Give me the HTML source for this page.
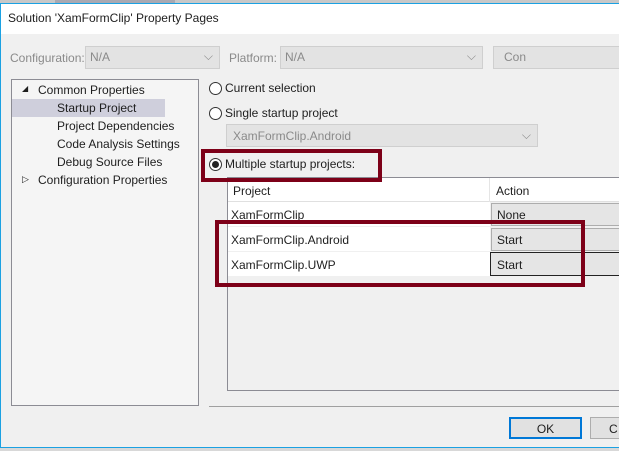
<!DOCTYPE html><html><head><style>
body{margin:0;width:619px;height:451px;overflow:hidden;background:#d8d8d8;font-family:"Liberation Sans",sans-serif;font-size:12px;color:#1e1e1e;position:relative}
div{position:absolute;box-sizing:border-box}
.t{white-space:nowrap}
.g{color:#8a8a8a}
.combo{background:#e3e3e3;border:1px solid #cfcfcf;color:#8a8a8a;padding:3px 3px}
.radio{width:13px;height:13px;border:1px solid #333;border-radius:50%;background:#fff}
.red{border:4px solid #7d0018}
</style></head><body>
<div style="left:0;top:0;width:619px;height:3px;background:#c8c8c8"></div>
<div style="left:55px;top:0;width:120px;height:3px;background:#a9a9b2"></div>
<div style="left:0;top:3px;width:619px;height:445px;background:#f0f0f0;border-left:1px solid #1ba1e2;border-top:1px solid #1ba1e2;border-bottom:1px solid #1ba1e2"></div>
<div style="left:1px;top:4px;width:618px;height:30px;background:#fff"></div>
<div class="t" style="left:8px;top:11px;font-size:12px">Solution 'XamFormClip' Property Pages</div>
<div class="t g" style="left:10px;top:51px">Configuration:</div>
<div class="combo" style="left:85px;top:46px;width:135px;height:23px;padding-left:4px">N/A<span style="position:absolute;right:6px;top:2px">⌵</span></div>
<div class="t g" style="left:229px;top:51px">Platform:</div>
<div class="combo" style="left:280px;top:46px;width:203px;height:23px;padding-left:4px">N/A<span style="position:absolute;right:6px;top:2px">⌵</span></div>
<div class="combo" style="left:493px;top:46px;width:130px;height:23px;padding-left:10px">Con</div>
<div style="left:11px;top:79px;width:188px;height:327px;background:#f5f5f5;border:1px solid #8c8c94"></div>
<div style="left:12px;top:99px;width:153px;height:18px;background:#cfcfdc"></div>
<div class="t" style="left:22px;top:84px;font-size:8px">◢</div>
<div class="t" style="left:38px;top:83px">Common Properties</div>
<div class="t" style="left:57px;top:101px">Startup Project</div>
<div class="t" style="left:57px;top:119px">Project Dependencies</div>
<div class="t" style="left:57px;top:137px">Code Analysis Settings</div>
<div class="t" style="left:57px;top:155px">Debug Source Files</div>
<div class="t" style="left:22px;top:174px;font-size:9px">▷</div>
<div class="t" style="left:38px;top:173px">Configuration Properties</div>
<div class="radio" style="left:209px;top:82px"></div>
<div class="t" style="left:225px;top:81px">Current selection</div>
<div class="radio" style="left:209px;top:107px"></div>
<div class="t" style="left:225px;top:106px">Single startup project</div>
<div class="combo" style="left:226px;top:124px;width:312px;height:23px;padding:4px 6px;font-size:12px">XamFormClip.Android<span style="position:absolute;right:6px;top:3px">⌵</span></div>
<div class="radio" style="left:209px;top:158px"><div style="left:2px;top:2px;width:7px;height:7px;border-radius:50%;background:#222"></div></div>
<div class="t" style="left:225px;top:157px">Multiple startup projects:</div>
<div style="left:227px;top:177px;width:400px;height:214px;background:#f0f0f0;border:1px solid #8c8c94"></div>
<div style="left:228px;top:178px;width:400px;height:24px;background:#fff;border-bottom:1px solid #e0e0e0"></div>
<div style="left:489px;top:178px;width:1px;height:24px;background:#e5e5e5"></div>
<div class="t" style="left:233px;top:184px">Project</div>
<div class="t" style="left:496px;top:184px">Action</div>
<div style="left:228px;top:202px;width:262px;height:74px;background:#fff"></div>
<div style="left:228px;top:226px;width:262px;height:1px;background:#f0f0f0"></div>
<div style="left:228px;top:251px;width:262px;height:1px;background:#f0f0f0"></div>
<div class="t" style="left:231px;top:208px">XamFormClip</div>
<div class="t" style="left:231px;top:233px">XamFormClip.Android</div>
<div class="t" style="left:231px;top:258px">XamFormClip.UWP</div>
<div style="left:491px;top:203px;width:130px;height:23px;background:#e5e5e5;border:1px solid #adadad;padding:4px 5px">None</div>
<div style="left:491px;top:228px;width:130px;height:23px;background:#e5e5e5;border:1px solid #adadad;padding:4px 5px">Start</div>
<div style="left:490px;top:252px;width:130px;height:24px;background:#e5e5e5;border:1px solid #222;padding:5px 6px">Start</div>
<div class="red" style="left:201px;top:149px;width:181px;height:33px"></div>
<div class="red" style="left:215px;top:220px;width:370px;height:67px"></div>
<div style="left:209px;top:406px;width:410px;height:1px;background:#a0a0a0"></div>
<div style="left:509px;top:417px;width:73px;height:22px;background:#e1e1e1;border:2px solid #0078d7;text-align:center;padding-top:3px">OK</div>
<div style="left:590px;top:417px;width:40px;height:22px;background:#e1e1e1;border:1px solid #adadad;padding:4px 0 0 18px">C</div>
</body></html>
